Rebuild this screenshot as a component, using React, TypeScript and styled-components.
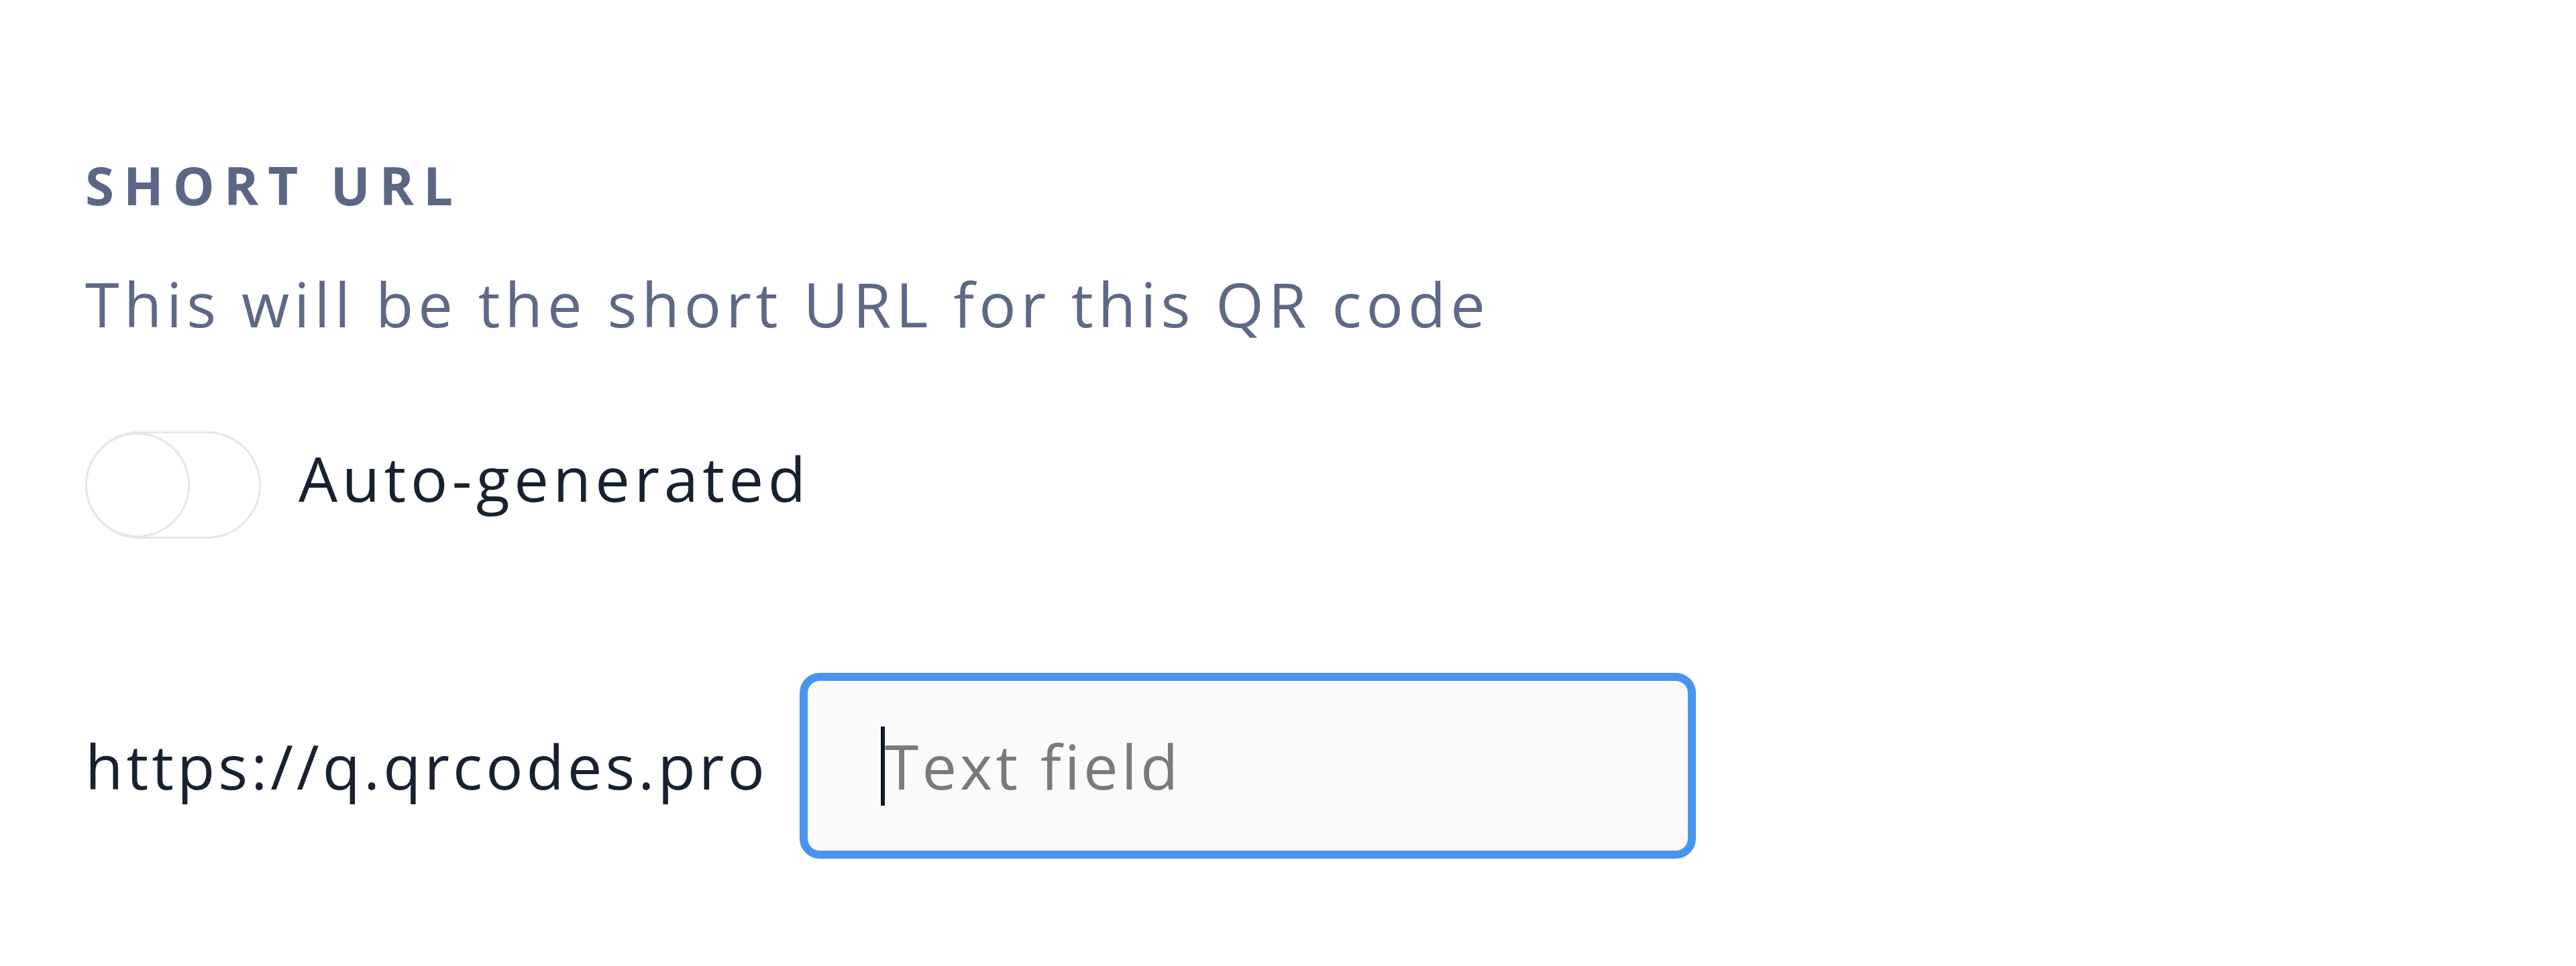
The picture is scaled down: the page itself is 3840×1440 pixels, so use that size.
import React from "react";
import styled, { createGlobalStyle } from "styled-components";

const Global = createGlobalStyle`
  html, body { margin: 0; padding: 0; background: #ffffff; }
  body {
    font-family: "Open Sans", "Noto Sans", sans-serif;
    -webkit-font-smoothing: antialiased;
  }
`;

const Page = styled.main`
  display: flex;
  flex-direction: column;
  align-items: flex-start;
  padding: 237px 0 0 127px;
  min-height: 1440px;
  box-sizing: border-box;
`;

const Heading = styled.h2`
  margin: 0;
  font-size: 78px;
  line-height: 78px;
  font-weight: 700;
  letter-spacing: 14px;
  color: #5b6784;
`;

const Description = styled.p`
  margin: 92px 0 0;
  font-size: 92px;
  line-height: 92px;
  font-weight: 400;
  letter-spacing: 7px;
  color: #5d6985;
`;

const ToggleRow = styled.label`
  display: flex;
  align-items: center;
  gap: 56px;
  margin-top: 144px;
  cursor: pointer;
`;

const Track = styled.span`
  display: flex;
  align-items: center;
  width: 262px;
  height: 160px;
  box-sizing: border-box;
  border: 3px solid #e4e6ea;
  border-radius: 80px;
  background: #ffffff;
`;

const Knob = styled.span`
  width: 156px;
  height: 156px;
  margin-left: -3px;
  box-sizing: border-box;
  border: 3px solid #e4e6ea;
  border-radius: 50%;
  background: #ffffff;
`;

const Label = styled.span`
  font-size: 92px;
  line-height: 92px;
  padding-bottom: 20px;
  letter-spacing: 6.5px;
  color: #18212f;
`;

const UrlRow = styled.div`
  display: flex;
  align-items: center;
  gap: 47px;
  margin-top: 200px;
`;

const Prefix = styled.span`
  font-size: 92px;
  line-height: 92px;
  letter-spacing: 5px;
  color: #18212f;
`;

const Field = styled.div`
  display: flex;
  align-items: center;
  width: 1336px;
  height: 277px;
  box-sizing: border-box;
  padding-left: 109px;
  border: 12px solid #4895ef;
  border-radius: 30px;
  background: #fafafa;
`;

const Caret = styled.span`
  width: 6px;
  height: 118px;
  background: #111827;
  flex: none;
`;

const Input = styled.input`
  flex: 1;
  min-width: 0;
  border: none;
  outline: none;
  background: transparent;
  padding: 0;
  margin: 0;
  font-family: "Open Sans", "Noto Sans", sans-serif;
  font-size: 92px;
  line-height: 92px;
  letter-spacing: 5px;
  color: #18212f;
  caret-color: transparent;
  &::placeholder {
    color: #7a7a7a;
  }
`;

export default function App() {
  return (
    <>
      <Global />
      <Page>
        <Heading>SHORT URL</Heading>
        <Description>This will be the short URL for this QR code</Description>
        <ToggleRow>
          <Track>
            <Knob />
          </Track>
          <Label>Auto-generated</Label>
        </ToggleRow>
        <UrlRow>
          <Prefix>https://q.qrcodes.pro</Prefix>
          <Field>
            <Caret />
            <Input placeholder="Text field" />
          </Field>
        </UrlRow>
      </Page>
    </>
  );
}
